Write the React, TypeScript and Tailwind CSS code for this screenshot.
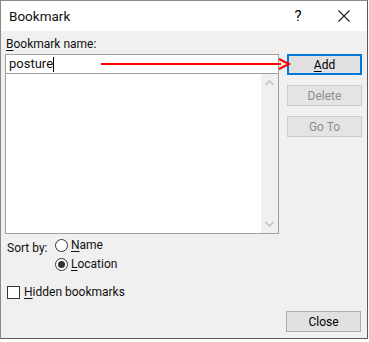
import { useState } from 'react';

const font = { fontFamily: 'Roboto, "Noto Sans", sans-serif' };

const Btn = ({ u, rest, focused, disabled }: { u: string; rest: string; focused?: boolean; disabled?: boolean }) => (
    <button
        className={`w-[75px] h-[21px] flex items-center justify-center text-[12px] leading-none
            ${focused ? 'border-2 border-[#0078d7] bg-[#e1e1e1] text-black' : ''}
            ${disabled ? 'border border-[#cccccc] bg-[#e4e4e4] text-[#8c8c8c]' : ''}
            ${!focused && !disabled ? 'border border-[#adadad] bg-[#e1e1e1] text-black' : ''}
        `}
    >
        <span className="underline underline-offset-2">{u}</span>
        {rest}
    </button>
);

export default function App() {
    const [sort, setSort] = useState<'name' | 'location'>('location');
    const [hidden, setHidden] = useState(false);

    return (
        <div className="w-[369px] h-[342px] bg-white text-black" style={font}>
            <div className="w-[368px] h-[339px] border border-[#8a8a8a] border-r-[#5a5a5a] border-b-[#5a5a5a] flex flex-col">
                {/* title bar */}
                <div className="h-[30px] bg-white flex items-center">
                    <span className="pl-[8px] text-[13.5px] flex-1 text-[#111]">Bookmark</span>
                    <span className="w-[46px] text-center text-[15px]">?</span>
                    <span className="w-[46px] flex justify-center">
                        <svg width="12" height="12" viewBox="0 0 12 12" stroke="#222" strokeWidth="1.1">
                            <path d="M0.5 0.5 L11.5 11.5 M11.5 0.5 L0.5 11.5" />
                        </svg>
                    </span>
                </div>

                <div className="flex-1 bg-[#f0f0f0] flex flex-col px-[4px] pb-[6px] text-[12px] text-[#111]">
                    <div className="flex gap-[8px] pt-[5px]">
                        <div className="w-[274px] flex flex-col">
                            <div className="h-[18px] leading-[17px] pl-[1px]"><span className="underline underline-offset-2">B</span>ookmark name:</div>
                            <div className="relative h-[20px] border border-[#a0a0a0] bg-white flex items-center pl-[3px] text-[13px]">
                                posture<span className="w-px h-[15px] bg-black" />
                                <div className="absolute left-[95px] top-[8px] w-[180px] h-[2px] bg-[#ff0000]" />
                                <svg className="absolute left-[270px] top-[3px]" width="16" height="12" viewBox="0 0 16 12">
                                    <path d="M3 1 L13 6 L3 11" fill="none" stroke="#ff0000" strokeWidth="2" />
                                </svg>
                            </div>
                            <div className="h-[160px] border border-[#a0a0a0] border-t-0 bg-white flex justify-end">
                                <div className="w-[17px] bg-[#f0f0f0] flex flex-col justify-between items-center py-[6px]">
                                    <svg width="9" height="6" viewBox="0 0 9 6"><path d="M0.5 5 L4.5 1 L8.5 5" fill="none" stroke="#c0c0c0" strokeWidth="1.5" /></svg>
                                    <svg width="9" height="6" viewBox="0 0 9 6"><path d="M0.5 1 L4.5 5 L8.5 1" fill="none" stroke="#c0c0c0" strokeWidth="1.5" /></svg>
                                </div>
                            </div>
                        </div>
                        <div className="flex flex-col gap-[10px] pt-[18px]">
                            <Btn u="A" rest="dd" focused />
                            <Btn u="" rest="Delete" disabled />
                            <Btn u="" rest="Go To" disabled />
                        </div>
                    </div>

                    <div className="flex pt-[3px] pl-[2px]">
                        <span className="w-[48px] pt-[2px]">Sort by:</span>
                        <div className="flex flex-col gap-[3px]">
                            <label className="flex items-center gap-[3px] h-[16px]" onClick={() => setSort('name')}>
                                <span className="w-[13px] h-[13px] rounded-full border border-[#333] bg-white flex items-center justify-center">
                                    {sort === 'name' && <span className="w-[7px] h-[7px] rounded-full bg-[#333]" />}
                                </span>
                                <span><span className="underline underline-offset-2">N</span>ame</span>
                            </label>
                            <label className="flex items-center gap-[3px] h-[16px]" onClick={() => setSort('location')}>
                                <span className="w-[13px] h-[13px] rounded-full border border-[#333] bg-white flex items-center justify-center">
                                    {sort === 'location' && <span className="w-[7px] h-[7px] rounded-full bg-[#333]" />}
                                </span>
                                <span><span className="underline underline-offset-2">L</span>ocation</span>
                            </label>
                        </div>
                    </div>

                    <label className="flex items-center gap-[4px] pt-[11px] pl-[2px]" onClick={() => setHidden(!hidden)}>
                        <span className="w-[13px] h-[13px] border border-[#333] bg-white" />
                        <span><span className="underline underline-offset-2">H</span>idden bookmarks</span>
                    </label>

                    <div className="flex-1" />
                    <div className="flex justify-end pr-[2px]">
                        <Btn u="" rest="Close" />
                    </div>
                </div>
            </div>
        </div>
    );
}
